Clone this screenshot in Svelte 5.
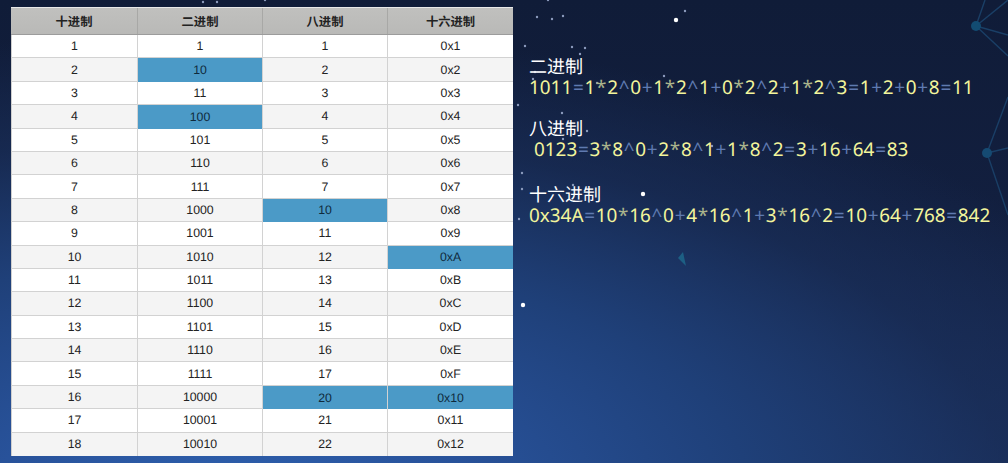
<script>
	const heads = ['十进制', '二进制', '八进制', '十六进制'];

	// which cells are highlighted: "row-col"
	const marked = new Set(['2-1', '4-1', '8-2', '10-3', '16-2', '16-3']);

	const rows = Array.from({ length: 18 }, (_, i) => {
		const n = i + 1;
		return [String(n), n.toString(2), n.toString(8), '0x' + n.toString(16).toUpperCase()];
	});

	const notes = [
		{ title: '二进制', expr: '1011=1*2^0+1*2^1+0*2^2+1*2^3=1+2+0+8=11', cls: '' },
		{ title: '八进制', expr: '0123=3*8^0+2*8^1+1*8^2=3+16+64=83', cls: 'octal' },
		{ title: '十六进制', expr: '0x34A=10*16^0+4*16^1+3*16^2=10+64+768=842', cls: 'hex' }
	];

	// split so + and = can be dimmer, like in the slide
	const parts = (s) => s.split(/([+=^*])/);

	const stars = [
		[203, 2], [217, 2], [265, 0], [548, 0], [537, 17], [552, 19], [563, 16], [685, 11],
		[525, 46], [572, 47], [585, 48], [580, 54], [535, 72], [567, 65], [533, 79], [597, 83],
		[664, 76], [518, 105], [562, 113], [587, 131], [563, 139], [712, 146], [522, 173],
		[522, 189], [573, 185], [519, 219]
	];
	const bright = [[676, 20], [643, 194], [523, 305]];
	const links = [
		[976, 26, 1008, 0], [976, 26, 985, 0], [976, 26, 1008, 35], [976, 26, 1008, 56],
		[987, 153, 1008, 97], [987, 153, 1008, 148], [987, 153, 1008, 215]
	];
</script>

<div class="slide">
	<svg class="sky" width="1008" height="463" viewBox="0 0 1008 463">
		{#each links as l}
			<line x1={l[0]} y1={l[1]} x2={l[2]} y2={l[3]} stroke="#1a3f66" stroke-width="1.4" />
		{/each}
		<circle cx="976" cy="26" r="5" fill="#124c72" />
		<circle cx="987" cy="153" r="5" fill="#154a72" />
		<polygon points="683,252 686,266 678,258" fill="#1d5f84" />
		{#each stars as s}
			<circle cx={s[0]} cy={s[1]} r="1.2" fill="#8c9bbd" />
		{/each}
		{#each bright as s}
			<circle cx={s[0]} cy={s[1]} r="2.2" fill="#fff" />
		{/each}
	</svg>

	<div class="table">
		<div class="row head">
			{#each heads as h}
				<div class="cell">{h}</div>
			{/each}
		</div>
		{#each rows as row, i}
			<div class="row" class:even={i % 2 === 1}>
				{#each row as value, c}
					<div class="cell" class:mark={marked.has(`${i + 1}-${c}`)}>{value}</div>
				{/each}
			</div>
		{/each}
	</div>

	<div class="notes">
		{#each notes as note}
			<div class="note {note.cls}">
				<div class="title">{note.title}</div>
				<div class="expr">
					{#each parts(note.expr) as p}
						{#if p === '+' || p === '=' || p === '^' || p === '*'}<span class="op" class:star={p === '*'}>{p}</span>{:else}{p}{/if}
					{/each}
				</div>
			</div>
		{/each}
	</div>
</div>

<style>
	:global(body) {
		margin: 0;
		overflow: hidden;
	}

	.slide {
		position: relative;
		width: 1008px;
		height: 463px;
		display: flex;
		align-items: flex-start;
		overflow: hidden;
		text-rendering: geometricPrecision;
		background:
			radial-gradient(ellipse 1000px 470px at 230px 500px, #2e60ae 0%, #28529a 24%, #1f4079 52%, rgba(26, 48, 92, 0.6) 78%, rgba(24, 44, 86, 0) 100%),
			linear-gradient(180deg, #101c38 0%, #121f3f 45%, #1a2d58 100%);
	}

	.sky {
		position: absolute;
		top: 0;
		left: 0;
	}

	.table {
		position: relative;
		box-sizing: border-box;
		flex: none;
		width: 502px;
		height: 449px;
		margin: 7px 0 0 11px;
		display: grid;
		grid-template-rows: 27px repeat(18, 1fr);
		background: #fff;
		border-top: 1px solid #e8e8e8;
		font: 12.3px "Liberation Sans", "Noto Sans CJK SC", sans-serif;
		color: #222;
	}

	.row {
		display: grid;
		grid-template-columns: 127px 125px 125px 125px;
		border-bottom: 1px solid #d2d2d2;
		min-height: 0;
	}

	.row:last-child {
		border-bottom: 0;
	}

	.row.even {
		background: #f4f4f4;
	}

	.row.head {
		background: linear-gradient(180deg, #c0c0be, #b9b9b7);
		border-bottom: 1px solid #9c9c9c;
		font-weight: 700;
		font-size: 12.3px;
		color: #222;
	}

	.cell {
		display: flex;
		align-items: center;
		justify-content: center;
		border-right: 1px solid #d2d2d2;
	}

	.row:not(.head) .cell:first-child {
		border-left: 1px solid #cfcfcf;
	}

	.cell:last-child {
		border-right: 0;
	}

	.head .cell {
		border-right-color: #a8a8a6;
	}

	.cell.mark {
		background: #4b9ac7;
		color: #0f2a3c;
		margin-bottom: -1px;
		position: relative;
	}

	.notes {
		position: relative;
		margin: 56px 0 0 16px;
		display: flex;
		flex-direction: column;
		gap: 20px;
		white-space: nowrap;
	}

	.note.octal {
		padding-bottom: 4px;
	}

	.title {
		font: 18px/21px "Noto Sans CJK SC", sans-serif;
		color: #fff;
	}

	.expr {
		font: 18.9px/21px "Noto Sans", "Open Sans", sans-serif;
		color: #f3f59c;
	}

	.octal .expr {
		padding-left: 5px;
	}

	.op {
		color: #5f7ab0;
		margin: 0 0.72px;
	}

	.op.star {
		color: #aab48c;
	}
</style>
